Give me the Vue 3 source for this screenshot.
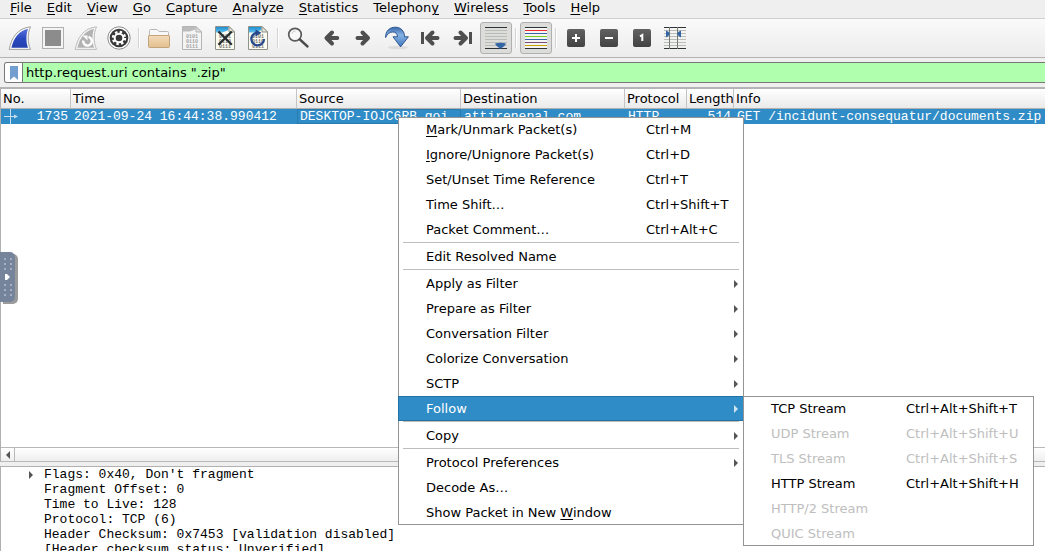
<script setup>
import { ref } from 'vue'

const filter = ref('http.request.uri contains ".zip"')

const menus = ['File', 'Edit', 'View', 'Go', 'Capture', 'Analyze', 'Statistics', 'Telephony', 'Wireless', 'Tools', 'Help'].map(
  (name) => {
    const at = name === 'Telephony' ? 8 : 0
    return { pre: name.slice(0, at), key: name[at], post: name.slice(at + 1) }
  }
)

const columns = [
  { name: 'No.', cls: 'c-no' },
  { name: 'Time', cls: 'c-time' },
  { name: 'Source', cls: 'c-addr' },
  { name: 'Destination', cls: 'c-addr' },
  { name: 'Protocol', cls: 'c-proto' },
  { name: 'Length', cls: 'c-len' },
  { name: 'Info', cls: 'c-info' }
]

const streams = [
  { label: 'TCP Stream', keys: 'Ctrl+Alt+Shift+T' },
  { label: 'UDP Stream', keys: 'Ctrl+Alt+Shift+U', off: true },
  { label: 'TLS Stream', keys: 'Ctrl+Alt+Shift+S', off: true },
  { label: 'HTTP Stream', keys: 'Ctrl+Alt+Shift+H' },
  { label: 'HTTP/2 Stream', off: true },
  { label: 'QUIC Stream', off: true }
]

const groups = [
  [
    { key: 'M', label: 'ark/Unmark Packet(s)', keys: 'Ctrl+M' },
    { key: 'I', label: 'gnore/Unignore Packet(s)', keys: 'Ctrl+D' },
    { label: 'Set/Unset Time Reference', keys: 'Ctrl+T' },
    { label: 'Time Shift…', keys: 'Ctrl+Shift+T' },
    { label: 'Packet Comment…', keys: 'Ctrl+Alt+C' }
  ],
  [{ label: 'Edit Resolved Name' }],
  [
    { label: 'Apply as Filter', sub: true },
    { label: 'Prepare as Filter', sub: true },
    { label: 'Conversation Filter', sub: true },
    { label: 'Colorize Conversation', sub: true },
    { label: 'SCTP', sub: true },
    { label: 'Follow', sub: true, items: streams }
  ],
  [{ label: 'Copy', sub: true }],
  [
    { label: 'Protocol Preferences', sub: true },
    { label: 'Decode As…' },
    { pre: 'Show Packet in New ', key: 'W', label: 'indow' }
  ]
]

const details = [
  { text: "Flags: 0x40, Don't fragment", branch: true },
  { text: 'Fragment Offset: 0' },
  { text: 'Time to Live: 128' },
  { text: 'Protocol: TCP (6)' },
  { text: 'Header Checksum: 0x7453 [validation disabled]' },
  { text: '[Header checksum status: Unverified]' }
]
</script>

<template>
  <div class="app">
    <nav class="menubar">
      <button v-for="m in menus" :key="m.pre + m.key + m.post">{{ m.pre }}<u>{{ m.key }}</u>{{ m.post }}</button>
    </nav>

    <div class="toolbar" role="toolbar">
      <svg class="defs" width="0" height="0" aria-hidden="true">
        <defs>
          <linearGradient id="blue" x1="0" y1="0" x2="0" y2="1">
            <stop offset="0" stop-color="#5a74e0" /><stop offset="0.5" stop-color="#2b49bf" /><stop offset="1" stop-color="#2440b0" />
          </linearGradient>
          <linearGradient id="sky" x1="0" y1="0" x2="0" y2="1">
            <stop offset="0" stop-color="#1f8fd0" /><stop offset="1" stop-color="#5fc0ee" />
          </linearGradient>
          <linearGradient id="tan" x1="0" y1="0" x2="0" y2="1">
            <stop offset="0" stop-color="#f3dcbb" /><stop offset="1" stop-color="#e3bf8d" />
          </linearGradient>
          <linearGradient id="jump" x1="0" y1="0" x2="0" y2="1">
            <stop offset="0" stop-color="#3a68ac" /><stop offset="0.4" stop-color="#86b4e4" /><stop offset="1" stop-color="#3f74bd" />
          </linearGradient>
          <linearGradient id="dark" x1="0" y1="0" x2="0" y2="1">
            <stop offset="0" stop-color="#626262" /><stop offset="1" stop-color="#424242" />
          </linearGradient>
        </defs>
      </svg>

      <button class="tool" aria-label="Start capture">
        <svg viewBox="0 0 24 24">
          <path d="M1.2 23.4C3.5 11.5 9.5 2.2 22.5 .8C19.4 8 19.4 16 22.5 23.4Z" fill="#fafafa" stroke="#a0a0a0" />
          <path d="M3.4 21.7C5.8 11.8 11 4.6 20 2.7C17.8 9 18 16 20 21.7Z" fill="url(#blue)" />
        </svg>
      </button>
      <button class="tool" aria-label="Stop capture">
        <svg viewBox="0 0 24 24">
          <rect x="1.5" y="1.5" width="21" height="21" fill="#f4f4f4" stroke="#b0b0b0" />
          <rect x="4" y="4" width="16" height="16" fill="#8c8c8c" />
        </svg>
      </button>
      <button class="tool" aria-label="Restart capture">
        <svg viewBox="0 0 24 24">
          <path d="M1.2 23.4C3.5 11.5 9.5 2.2 22.5 .8C19.4 8 19.4 16 22.5 23.4Z" fill="#f5f5f5" stroke="#bcbcbc" />
          <path d="M3.4 21.7C5.8 11.8 11 4.6 20 2.7C17.8 9 18 16 20 21.7Z" fill="#b2b2b2" />
          <path d="M9.3 14.5A4.3 4.3 0 1 0 16.5 12.2L14.6 10.6" fill="none" stroke="#fff" stroke-width="2.4" />
          <path d="M8.5 9.5H13.5V14.5Z" fill="#fff" />
        </svg>
      </button>
      <button class="tool" aria-label="Capture options">
        <svg viewBox="0 0 24 24">
          <circle cx="12" cy="12" r="11.2" fill="#fff" stroke="#8a8a8a" />
          <circle cx="12" cy="12" r="9.3" fill="#383838" />
          <circle cx="12" cy="12" r="6" fill="none" stroke="#fff" stroke-width="2.4" stroke-dasharray="2.4 2.312" />
          <circle cx="12" cy="12" r="4.3" fill="#383838" stroke="#fff" stroke-width="2" />
        </svg>
      </button>
      <i class="sep"></i>
      <button class="tool" aria-label="Open">
        <svg viewBox="0 0 24 24">
          <path d="M2.5 11V4.5Q2.5 3.5 3.5 3.5H10L12 5.5H20.5Q21.5 5.5 21.5 6.5V11Z" fill="#f8f8f8" stroke="#bab8b4" />
          <path d="M1.5 10Q1.5 9.5 2 9.5H22Q22.5 9.5 22.5 10V20.5Q22.5 21.5 21.5 21.5H2.5Q1.5 21.5 1.5 20.5Z" fill="url(#tan)" stroke="#c2a47c" />
        </svg>
      </button>
      <button class="tool" aria-label="Save">
        <svg viewBox="0 0 24 24">
          <path d="M2.5 .5H16L21.5 6V23.5H2.5Z" fill="#f4f4f4" stroke="#b4b4b4" />
          <path d="M3 1H15.5V3.5L9.5 5.5H3Z" fill="#bcbcbc" />
          <path d="M16 .5V6H21.5Z" fill="#dedede" stroke="#b4b4b4" />
          <g class="bits dim"><text x="6" y="12">0101</text><text x="6" y="17">0110</text><text x="6" y="22">0111</text></g>
        </svg>
      </button>
      <button class="tool" aria-label="Close">
        <svg viewBox="0 0 24 24">
          <path d="M2.5 .5H16L21.5 6V23.5H2.5Z" fill="#fcfcf0" stroke="#8f918a" />
          <path d="M3 1H15.5V4L9.5 6.5H3Z" fill="url(#sky)" />
          <path d="M16 .5V6H21.5Z" fill="#e8e8dc" stroke="#8f918a" />
          <g class="bits"><text x="6" y="12">0101</text><text x="6" y="17">0110</text><text x="6" y="22">0111</text></g>
          <path d="M5.5 5.5L18.8 18.8M18.8 5.5L5.5 18.8" stroke="#252c30" stroke-width="2.3" />
        </svg>
      </button>
      <button class="tool" aria-label="Reload">
        <svg viewBox="0 0 24 24">
          <path d="M2.5 .5H16L21.5 6V23.5H2.5Z" fill="#fcfcf0" stroke="#8f918a" />
          <path d="M3 1H15.5V4L9.5 6.5H3Z" fill="url(#sky)" />
          <path d="M16 .5V6H21.5Z" fill="#e8e8dc" stroke="#8f918a" />
          <g class="bits"><text x="6" y="12">0101</text><text x="6" y="17">0110</text><text x="6" y="22">0111</text></g>
          <path d="M10.5 6.8A6.3 6.3 0 1 0 18 13" fill="none" stroke="#264a8c" stroke-width="2.3" />
          <path d="M9.5 3.4L15.5 6.8L9.5 10.4Z" fill="#264a8c" />
        </svg>
      </button>
      <i class="sep"></i>
      <button class="tool" aria-label="Find packet">
        <svg viewBox="0 0 24 24">
          <circle cx="9" cy="8.6" r="6.3" fill="#f8f8f8" stroke="#5a5a5a" stroke-width="1.7" />
          <path d="M6 7.4A3.6 3.6 0 0 1 9.5 5" fill="none" stroke="#c8c8c8" />
          <path d="M13.8 13.4L21.4 20.4" stroke="#4a4a4a" stroke-width="2.6" stroke-linecap="round" />
        </svg>
      </button>
      <button class="tool" aria-label="Previous packet">
        <svg viewBox="0 0 24 24"><path class="arrow" d="M18.3 12H8M13 6.5L7.5 12L13 17.5" /></svg>
      </button>
      <button class="tool" aria-label="Next packet">
        <svg viewBox="0 0 24 24"><path class="arrow" d="M5.5 12H15.5M10.5 6.5L16 12L10.5 17.5" /></svg>
      </button>
      <button class="tool" aria-label="Go to packet">
        <svg viewBox="0 0 24 24">
          <ellipse cx="13" cy="21.5" rx="10" ry="1.8" fill="#dcdcdc" />
          <path d="M.6 11.5C.4 5 4.6 1.2 10.2 1.2C16.2 1.2 19.4 5.2 19.6 10.8H23.4L15.6 20.8L8 10.8H12.6C12.3 7.6 10.6 6 7.8 6C4.6 6 2.2 8 .6 11.5Z" fill="url(#jump)" stroke="#2d568f" stroke-linejoin="round" />
        </svg>
      </button>
      <button class="tool" aria-label="First packet">
        <svg viewBox="0 0 24 24"><path class="arrow" d="M19.5 12H10M14.5 6.5L9 12L14.5 17.5" /><path d="M3 6H6V18H3Z" fill="#4f4f4f" /></svg>
      </button>
      <button class="tool" aria-label="Last packet">
        <svg viewBox="0 0 24 24"><path class="arrow" d="M4.5 12H14M9.5 6.5L15 12L9.5 17.5" /><path d="M18 6H21V18H18Z" fill="#4f4f4f" /></svg>
      </button>
      <button class="tool on" aria-label="Auto scroll" aria-pressed="true">
        <svg viewBox="0 0 24 24">
          <path d="M1 1.5H23M1 22.5H23" stroke="#2e3436" />
          <path d="M1 4.5H23M1 7.5H23M1 10.5H23M1 13.5H23M1 16.5H23M1 19.5H23" stroke="#babdb6" />
          <path d="M11 17.5Q16.5 16 22 17.5Q21.5 19.5 16.5 23Q11.5 19.5 11 17.5Z" fill="#3465a4" />
        </svg>
      </button>
      <i class="sep"></i>
      <button class="tool on" aria-label="Colorize" aria-pressed="true">
        <svg viewBox="0 0 24 24">
          <path d="M1 2H23V22H1Z" fill="#f4f4f4" />
          <path d="M1 1.5H23M1 22.5H23" stroke="#2e3436" />
          <path d="M1 4.5H23" stroke="#ef2929" /><path d="M1 7.5H23" stroke="#3465a4" />
          <path d="M1 10.5H23" stroke="#73d216" /><path d="M1 13.5H23" stroke="#3465a4" />
          <path d="M1 16.5H23" stroke="#75507b" /><path d="M1 19.5H23" stroke="#c4a000" />
        </svg>
      </button>
      <i class="sep"></i>
      <button class="tool" aria-label="Zoom in">
        <svg viewBox="0 0 24 24"><rect x="3" y="3" width="18" height="18" rx="2" fill="url(#dark)" /><path d="M8 12H16M12 8V16" stroke="#fff" stroke-width="2" /></svg>
      </button>
      <button class="tool" aria-label="Zoom out">
        <svg viewBox="0 0 24 24"><rect x="3" y="3" width="18" height="18" rx="2" fill="url(#dark)" /><path d="M8 12H16" stroke="#fff" stroke-width="2" /></svg>
      </button>
      <button class="tool" aria-label="Normal size">
        <svg viewBox="0 0 24 24"><rect x="3" y="3" width="18" height="18" rx="2" fill="url(#dark)" /><path d="M10 10.3L12.3 9V15" fill="none" stroke="#fff" stroke-width="2" /></svg>
      </button>
      <button class="tool" aria-label="Resize columns">
        <svg viewBox="0 0 24 24">
          <path d="M1 1.5H23M1 22.5H23" stroke="#2e3436" />
          <path d="M1 4.5H23M1 7.5H23M1 10.5H23M1 13.5H23M1 16.5H23M1 19.5H23" stroke="#babdb6" />
          <path d="M6.5 1V23M14.5 1V23" stroke="#777b75" />
          <path d="M3 4.5Q6 5.5 7 7.8Q6 10 3 11.5Z" fill="#3465a4" /><path d="M18 4.5Q15 5.5 14 7.8Q15 10 18 11.5Z" fill="#3465a4" />
        </svg>
      </button>
    </div>

    <form class="filterbar" @submit.prevent>
      <button type="button" class="bookmark" aria-label="Filter bookmarks">
        <svg viewBox="0 0 8 14"><path d="M0 0H8V14L4 10.5L0 14Z" fill="#729fcf" /></svg>
      </button>
      <input v-model="filter" aria-label="Display filter" spellcheck="false" />
    </form>

    <main class="packets">
      <table>
        <thead>
          <tr><th v-for="c in columns" :key="c.name" :class="c.cls">{{ c.name }}</th></tr>
        </thead>
        <tbody>
          <tr>
            <td class="num first">
              <span><svg viewBox="0 0 16 15"><path d="M8.5 0V15M2 7.5H13" stroke="#c5def0" /><path d="M12 5.5L16 7.5L12 9.5Z" fill="#c5def0" /></svg>1735</span>
            </td>
            <td>2021-09-24 16:44:38.990412</td>
            <td class="focus">DESKTOP-IOJC6RB.goi…</td>
            <td>attirenepal.com</td>
            <td>HTTP</td>
            <td class="num">514</td>
            <td>GET /incidunt-consequatur/documents.zip</td>
          </tr>
        </tbody>
      </table>
      <div class="hscroll">
        <button aria-label="Scroll left"><svg viewBox="0 0 4 8"><path d="M4 0V8L0 4Z" fill="#555" /></svg></button>
      </div>
      <button class="handle" aria-label="Open side panel">
        <svg viewBox="0 0 15 50">
          <path d="M4 6h2v2h-2zM10 6h2v2h-2zM4 11h2v2h-2zM10 11h2v2h-2zM4 16h2v2h-2zM10 16h2v2h-2zM4 32h2v2h-2zM10 32h2v2h-2zM4 37h2v2h-2zM10 37h2v2h-2zM4 42h2v2h-2zM10 42h2v2h-2z" fill="#a3b0c2" />
          <path d="M5 22H7L10 25L7 28H5Z" fill="#fff" />
        </svg>
      </button>
    </main>

    <section class="details">
      <ul>
        <li v-for="d in details" :key="d.text">
          <svg v-if="d.branch" viewBox="0 0 4 8"><path d="M0 0L4 4L0 8Z" fill="#555" /></svg>{{ d.text }}
        </li>
      </ul>
    </section>

    <div class="menu context" role="menu">
      <div v-for="(g, i) in groups" :key="i" class="group">
        <div v-for="it in g" :key="it.label" class="entry">
          <button role="menuitem" :class="{ active: it.items }">
            <span>{{ it.pre }}<u v-if="it.key">{{ it.key }}</u>{{ it.label }}</span>
            <kbd v-if="it.keys">{{ it.keys }}</kbd>
            <svg v-if="it.sub" viewBox="0 0 4 8"><path d="M0 0L4 4L0 8Z" fill="currentColor" /></svg>
          </button>
          <div v-if="it.items" class="menu submenu" role="menu">
            <button v-for="s in it.items" :key="s.label" role="menuitem" :disabled="s.off">
              <span>{{ s.label }}</span>
              <kbd v-if="s.keys">{{ s.keys }}</kbd>
            </button>
          </div>
        </div>
      </div>
    </div>
  </div>
</template>

<style>
html,
body {
  overflow: hidden;
}
</style>

<style scoped>
.app {
  position: relative;
  display: flex;
  flex-direction: column;
  height: 100vh;
  overflow: hidden;
  background: #efefef;
  color: #000;
  font: 13px/15px "DejaVu Sans", sans-serif;
}
.app * {
  box-sizing: border-box;
}
button {
  margin: 0;
  padding: 0;
  border: 0;
  background: none;
  color: inherit;
  font: inherit;
}
u {
  text-decoration-thickness: 1px;
  text-underline-offset: 2px;
}
.menubar {
  display: flex;
  height: 19px;
  padding-left: 2px;
  border-bottom: 1px solid #d0d0d0;
  flex: none;
}
.menubar button {
  height: 14px;
  padding: 0 7px 0 8px;
}
.toolbar {
  display: flex;
  flex: none;
  align-items: center;
  gap: 1px;
  height: 39px;
  padding-left: 4px;
  border-bottom: 1px solid #b4b4b4;
  background: linear-gradient(#fafafa, #ececec);
}
.defs {
  position: absolute;
}
.tool {
  display: grid;
  flex: none;
  place-items: center;
  width: 32px;
  height: 31px;
  border-radius: 3px;
}
.tool svg {
  width: 24px;
  height: 24px;
}
.tool.on {
  height: 32px;
  border: 1px solid #b0b0b0;
  background: #dcdcda;
}
.arrow {
  fill: none;
  stroke: #4f4f4f;
  stroke-width: 4;
  stroke-linecap: round;
  stroke-linejoin: round;
}
.bits {
  fill: #777;
  font: bold 5px "Liberation Mono", monospace;
}
.bits.dim {
  fill: #a4a4a4;
}
.sep {
  flex: none;
  width: 6px;
  height: 20px;
  background: linear-gradient(90deg, transparent 2px, #d4d4d4 2px 3px, #fff 3px 4px, transparent 4px);
}
.filterbar {
  display: flex;
  flex: none;
  height: 21px;
  margin: 4px 0 4px 4px;
  border: 1px solid #777;
  border-right: 0;
  border-radius: 3px 0 0 3px;
  background: #afffaf;
}
.bookmark {
  display: grid;
  flex: none;
  place-items: center;
  width: 18px;
  border-right: 1px solid #777;
  border-radius: 2px 0 0 2px;
  background: #fff;
}
.bookmark svg {
  width: 8px;
  height: 14px;
}
.filterbar input {
  flex: 1;
  min-width: 0;
  padding: 0 3px;
  border: 0;
  outline: 0;
  background: none;
  color: #000;
  font: inherit;
}
.packets {
  position: relative;
  display: flex;
  flex: 1;
  flex-direction: column;
  justify-content: space-between;
  min-height: 0;
  border-top: 2px solid #b4b4b4;
  border-left: 1px solid #b0b0b0;
  background: #fff;
}
table {
  width: 100%;
  border-collapse: separate;
  border-spacing: 0;
  table-layout: fixed;
}
th {
  height: 20px;
  padding: 0 2px;
  overflow: hidden;
  border-right: 1px solid #c4c4c4;
  border-bottom: 1px solid #b0b0b0;
  background: linear-gradient(#fff, #eaeaea);
  font-weight: normal;
  text-align: left;
  white-space: nowrap;
}
th:last-child {
  border-right: 0;
}
.c-no {
  width: 70px;
}
.c-time {
  width: 226px;
}
.c-addr {
  width: 164px;
}
.c-proto {
  width: 62px;
}
.c-len {
  width: 47px;
  padding-right: 0;
}
td {
  height: 15px;
  padding: 0 3px;
  overflow: hidden;
  background: #308cc6;
  color: #fff;
  font: 13px/15px "Liberation Mono", monospace;
  white-space: nowrap;
}
td.num {
  text-align: right;
}
td.first {
  padding-left: 1px;
}
td.first span {
  display: flex;
  align-items: center;
  justify-content: space-between;
}
td.first svg {
  width: 16px;
  height: 15px;
}
td.focus {
  box-shadow: inset 0 0 0 1px #2a7bae;
}
.hscroll {
  height: 15px;
  border: solid #b8b8b8;
  border-width: 1px 0;
  background: linear-gradient(#fff, #eee);
}
.hscroll button {
  display: grid;
  place-items: center;
  width: 14px;
  height: 13px;
  border-right: 1px solid #b8b8b8;
}
.hscroll svg {
  width: 4px;
  height: 8px;
}
.handle {
  position: absolute;
  top: 163px;
  left: -1px;
  width: 15px;
  height: 50px;
  border-radius: 0 5px 5px 0;
  background: #75849b;
  box-shadow: 3px 2px 0 #9b9b9b;
}
.handle svg {
  display: block;
  width: 15px;
  height: 50px;
}
.details {
  flex: 0 0 85px;
  margin-top: 4px;
  overflow: hidden;
  border: solid #b0b0b0;
  border-width: 1px 0 0 1px;
  background: #fff;
}
.details ul {
  margin: 0;
  padding: 0;
  list-style: none;
}
.details li {
  position: relative;
  padding-left: 43px;
  font: 13px/15px "Liberation Mono", monospace;
  white-space: nowrap;
}
.details svg {
  position: absolute;
  top: 4px;
  left: 28px;
  width: 4px;
  height: 8px;
}
.menu {
  position: absolute;
  background: #fff;
  box-shadow: inset 0 0 0 1px #949494;
}
.context {
  top: 117px;
  left: 398px;
  width: 346px;
}
.submenu {
  top: 0;
  left: 345px;
  width: 291px;
}
.entry {
  position: relative;
}
.menu button {
  display: grid;
  grid-template-columns: 220px 1fr 4px;
  align-items: center;
  width: 100%;
  height: 25px;
  padding: 0 6px 0 28px;
  text-align: left;
  white-space: nowrap;
}
.submenu button {
  grid-template-columns: 135px 1fr;
}
.menu button:disabled {
  color: #bebebe;
}
.menu kbd {
  font: inherit;
}
.menu svg {
  grid-column: 3;
  width: 4px;
  height: 8px;
  color: #555;
}
.menu .active {
  border: solid #2472a3;
  border-width: 1px 0 1px 1px;
  width: 345px;
  padding: 0 5px 0 27px;
  background: #308cc6;
  color: #fff;
}
.menu .active svg {
  color: #cfe4f2;
}
.group + .group::before {
  content: "";
  display: block;
  height: 1px;
  margin: 0 5px 1px;
  background: #bdbdbd;
}
</style>
